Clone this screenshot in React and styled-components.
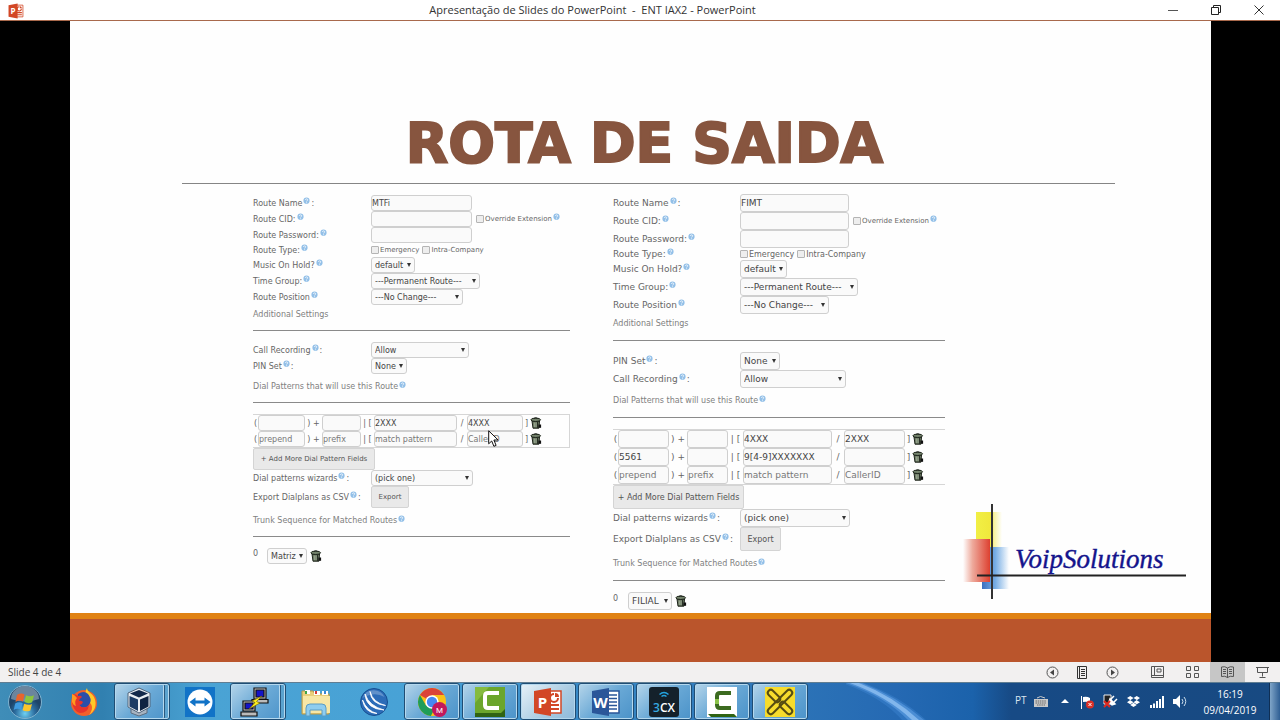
import React, { useState } from 'react';
import styled, { createGlobalStyle, css, ThemeProvider } from 'styled-components';
import { FaDropbox } from 'react-icons/fa';

const GlobalStyle = createGlobalStyle`
  * {
    box-sizing: border-box;
  }
  body {
    margin: 0;
    background: #000;
    font-family: 'Open Sans', 'Noto Sans', sans-serif;
  }
  button, input, select {
    margin: 0;
    font-family: inherit;
  }
`;

// the two form captures on the slide are the same page at different scales
const smallForm = {
  text: 8, note: 7, heading: 8, label: 118, row: 16, checkRow: 14, input: 101,
  headFirst: 3, headNext: 6, headBottom: 9, afterRule: 11,
  cols: '5px 47px 17px 39px 13px 83px 10px 56px 7px 1fr',
  button: 22, addWidth: 122, exportWidth: 38, trunkGap: 9, boxed: true,
};

const largeForm = {
  text: 9, note: 8, heading: 8, label: 127, row: 18, checkRow: 12, input: 109,
  headFirst: 3, headNext: 6, headBottom: 10, afterRule: 11,
  cols: '5px 51px 18px 41px 15px 89px 12px 61px 7px 1fr',
  button: 24, addWidth: 131, exportWidth: 41, trunkGap: 10, boxed: false,
};

const Screen = styled.div`
  position: relative;
  display: flex;
  flex-direction: column;
  min-height: 100vh;
`;

const TitleBar = styled.header`
  display: flex;
  align-items: center;
  height: 21px;
  background: #fff;
  border-bottom: 1px solid #a8694c;
`;

const AppIcon = styled.div`
  width: 34px;
  height: 16px;
  padding-left: 8px;
`;

const WindowTitle = styled.div`
  flex: 1;
  text-align: center;
  font-size: 11px;
  line-height: 20px;
  color: #333;
  white-space: nowrap;
`;

const WindowButton = styled.button`
  display: flex;
  align-items: center;
  justify-content: center;
  width: 43px;
  height: 20px;
  padding: 0;
  border: none;
  background: none;
`;

const Stage = styled.main`
  flex: 1;
  display: flex;
  padding: 0 69px 0 70px;
  background: #000;
`;

const Slide = styled.section`
  flex: 1;
  display: flex;
  flex-direction: column;
  background: #fefefe;
`;

const SlideTitle = styled.h1`
  margin: 0 96px 0 112px;
  padding: 80px 8px 0 0;
  height: 163px;
  border-bottom: 1px solid #858585;
  font-family: 'DejaVu Sans', Verdana, sans-serif;
  font-size: 55px;
  font-weight: 700;
  line-height: 84px;
  text-align: center;
  color: #87553f;
  -webkit-text-stroke: 2px #87553f;
`;

const SlideBody = styled.div`
  flex: 1;
  display: grid;
  grid-template-columns: 317fr 43px 332fr 241fr;
  align-items: start;
  padding: 10px 25px 0 183px;
`;

const Footer = styled.div`
  height: 49px;
  background: #ba552c;
  border-top: 6px solid #e08214;
`;

const Panel = styled.form`
  font-family: 'DejaVu Sans', Verdana, sans-serif;
  font-size: ${(p) => p.theme.text}px;
  color: #666;
`;

const FormRow = styled.div`
  display: flex;
  align-items: center;
  height: ${(p) => (p.checks ? p.theme.checkRow : p.theme.row)}px;
`;

const RowLabel = styled.label`
  display: flex;
  align-items: center;
  gap: 1px;
  width: ${(p) => p.theme.label}px;
  white-space: nowrap;
`;

const Heading = styled.h2`
  display: flex;
  align-items: center;
  gap: 1px;
  margin: 0 0 ${(p) => p.theme.afterRule}px;
  padding: ${(p) => (p.first ? p.theme.headFirst : p.theme.headNext)}px 0 ${(p) => p.theme.headBottom}px;
  border-bottom: 1px solid #8a8a8a;
  font-size: ${(p) => p.theme.heading}px;
  font-weight: 400;
  line-height: 13px;
  color: #808080;
  white-space: nowrap;
`;

const box = css`
  border: 1px solid #cfcfcf;
  border-radius: 3px;
  background: #fafafa;
  color: #444;
`;

const TextInput = styled.input`
  ${box}
  width: ${(p) => (p.fill ? '100%' : `${p.theme.input}px`)};
  min-width: 0;
  height: ${(p) => p.theme.row}px;
  padding: 0;
  font-size: ${(p) => p.theme.text}px;
  &::placeholder {
    color: #777;
    opacity: 1;
  }
`;

const SelectWrap = styled.span`
  position: relative;
  display: inline-flex;
  &::after {
    content: '';
    position: absolute;
    right: 4px;
    top: 50%;
    margin-top: -2px;
    border: 2px solid transparent;
    border-top: 4px solid #333;
    border-bottom: none;
  }
`;

const Select = styled.select`
  ${box}
  appearance: none;
  width: ${(p) => p.width}px;
  height: ${(p) => p.theme.row}px;
  padding: 0 0 0 3px;
  font-size: ${(p) => p.theme.text}px;
`;

const CheckLabel = styled.label`
  display: flex;
  align-items: center;
  gap: 1px;
  margin-left: ${(p) => (p.aside ? 4 : 0)}px;
  margin-right: ${(p) => (p.aside ? 0 : 3)}px;
  font-size: ${(p) => (p.aside ? 7 : p.theme.note)}px;
  white-space: nowrap;
`;

const CheckBox = styled.input`
  appearance: none;
  width: 8px;
  height: 8px;
  border: 1px solid #b4b4b4;
  border-radius: 1px;
  background: #eee;
`;

const DialTable = styled.div`
  border: 1px solid #d6d6d6;
  border-width: 1px ${(p) => (p.theme.boxed ? 1 : 0)}px 1px 0;
`;

const DialRow = styled.div`
  display: grid;
  grid-template-columns: ${(p) => p.theme.cols};
  align-items: center;
  height: ${(p) => p.theme.row}px;
  white-space: pre;
`;

const Mark = styled.span`
  text-align: center;
`;

const GreyButton = styled.button`
  width: ${(p) => (p.wide ? p.theme.addWidth : p.theme.exportWidth)}px;
  height: ${(p) => p.theme.button}px;
  padding: 0;
  border: 1px solid #d4d4d4;
  border-radius: 2px;
  background: #e9e9e9;
  font-size: ${(p) => p.theme.note}px;
  color: #555;
  white-space: nowrap;
`;

const ButtonRow = styled.div`
  display: flex;
  align-items: center;
  height: ${(p) => p.theme.button}px;
`;

const TrunkRow = styled.div`
  display: flex;
  align-items: center;
  gap: 3px;
`;

const TrunkIndex = styled.label`
  padding-bottom: 5px;
  margin-right: ${(p) => p.theme.trunkGap - 3}px;
  font-size: 8px;
`;

const LeftPanel = styled.div`
  padding-top: 1px;
`;

const RightPanel = styled.div`
  grid-column: 3;
`;

const LogoBox = styled.div`
  align-self: end;
  justify-self: end;
  padding-bottom: 9px;
`;

const StatusBar = styled.footer`
  display: flex;
  align-items: center;
  height: 20px;
  padding-left: 8px;
  background: #f2f0f0;
  font-size: 10px;
  color: #444;
`;

const Spacer = styled.div`
  flex: 1;
`;

const StatusButton = styled.button`
  display: flex;
  align-items: center;
  justify-content: center;
  width: ${(p) => (p.nav ? 30 : 35)}px;
  height: 20px;
  padding: 0;
  border: none;
  background: ${(p) => (p.active ? '#c6c6c6' : 'none')};
`;

const NavGroup = styled.div`
  display: flex;
  margin-right: 13px;
`;

const TaskBar = styled.nav`
  display: flex;
  align-items: center;
  height: 38px;
  border-top: 1px solid #5f7d92;
  background: linear-gradient(90deg, #3f8db8 0%, #3180b0 8%, #4aa3d4 16%, #48a2d6 32%, #3789c6 45%, #2e76b8 60%, #2569b3 70%, #1b62ab 76%, #174a85 79%, #184a82 100%);
`;

const Glare = styled.svg`
  margin-left: 38px;
`;

const StartButton = styled.button`
  display: flex;
  width: 56px;
  padding: 0 0 0 7px;
  border: none;
  background: none;
`;

const TaskList = styled.div`
  display: flex;
  gap: 2px;
`;

const TaskButton = styled.button`
  display: flex;
  align-items: center;
  justify-content: center;
  width: 56px;
  height: 37px;
  padding: 0 ${(p) => (p.stacked ? 7 : 0)}px 0 0;
  border: 1px solid transparent;
  border-radius: 3px;
  background: none;
  ${(p) => p.open && css`
    border-color: #1f4d74;
    box-shadow: inset 0 0 0 1px #b4d8ee;
    background: linear-gradient(135deg, ${p.active ? '#e8f2f8, #a9cbe2 60%, #8dbadb' : '#b5d5ea, #6aa9d6 50%, #4b93c9'});
  `}
  ${(p) => p.stacked && css`
    box-shadow: inset 0 0 0 1px #b4d8ee, inset -4px 0 0 #5ba3cf, inset -5px 0 0 #28587f, inset -6px 0 0 #b4d8ee;
  `}
`;

const Tray = styled.div`
  display: flex;
  align-items: center;
  margin-left: auto;
  height: 37px;
  color: #fff;
`;

const Language = styled.span`
  width: 15px;
  font-size: 10px;
  line-height: 30px;
  padding-bottom: 4px;
  color: #dbe6f0;
`;

const TrayItem = styled.span`
  display: flex;
  align-items: center;
  justify-content: center;
  width: 23px;
`;

const Clock = styled.time`
  width: 78px;
  font-size: 10px;
  line-height: 16px;
  text-align: center;
`;

const ShowDesktop = styled.button`
  width: 11px;
  height: 37px;
  padding: 0;
  border: none;
  border-left: 1px solid #0f2f55;
  background: linear-gradient(90deg, #7fa5c8, #2f5f94);
`;

const Pointer = styled.svg`
  position: absolute;
  left: 488px;
  top: 430px;
`;

const HelpIcon = () => (
  <svg width="7" height="12" viewBox="0 0 7 12" aria-hidden="true">
    <circle cx="3.5" cy="3.7" r="3.1" fill="#93c0e8" />
    <path d="M2.4 3c0-1.5 2.3-1.4 2.3-.1 0 .8-1.1.8-1.1 1.6M3.6 5.1v.7" fill="none" stroke="#fff" strokeWidth=".8" />
  </svg>
);

const TrashIcon = () => (
  <svg width="12" height="12" viewBox="0 0 12 12" aria-hidden="true">
    <path d="M2 4h7.500l-.6 7.200H3z" fill="#68765f" stroke="#1d241b" />
    <path d="M4.300 5.500v4.500M6 5.500v4.500" stroke="#aab6a2" strokeWidth=".8" />
    <path d="M7.500 5v6" stroke="#293026" />
    <ellipse cx="5.700" cy="2.800" rx="4.800" ry="1.700" fill="#74836c" stroke="#1d241b" />
    <path d="M4 1.300q2-1 3.500 0" fill="none" stroke="#1d241b" />
    <path d="M8.500 7.500h2.600v3.300H8.500z" fill="#111" />
  </svg>
);

const Drop = ({ id, value, width, label }) => (
  <SelectWrap>
    <Select id={id} width={width} defaultValue={value} aria-label={label}>
      <option>{value}</option>
    </Select>
  </SelectWrap>
);

const Label = ({ htmlFor, text, colon }) => (
  <RowLabel htmlFor={htmlFor}>
    {text}
    <HelpIcon />
    {colon && ':'}
  </RowLabel>
);

const SelectRow = ({ id, text, colon, value, width }) => (
  <FormRow>
    <Label htmlFor={id} text={text} colon={colon} />
    <Drop id={id} value={value} width={width} />
  </FormRow>
);

const Pattern = ({ values }) => {
  const field = (name, value) => (
    <TextInput fill="true" aria-label={name} placeholder={values ? '' : name} defaultValue={value} />
  );
  const [prepend = '', prefix = '', match = '', caller = ''] = values || [];
  return (
    <DialRow>
      <Mark>(</Mark>
      {field('prepend', prepend)}
      <Mark>) +</Mark>
      {field('prefix', prefix)}
      <Mark>| [</Mark>
      {field('match pattern', match)}
      <Mark>/</Mark>
      {field('CallerID', caller)}
      <Mark>]</Mark>
      <TrashIcon />
    </DialRow>
  );
};

const RouteForm = ({ id, theme, name, widths, recording, patterns, trunk }) => (
  <ThemeProvider theme={theme}>
    <Panel onSubmit={(e) => e.preventDefault()}>
      <FormRow>
        <Label htmlFor={`${id}-name`} text="Route Name" colon />
        <TextInput id={`${id}-name`} defaultValue={name} />
      </FormRow>
      <FormRow>
        <Label htmlFor={`${id}-cid`} text="Route CID:" />
        <TextInput id={`${id}-cid`} />
        <CheckLabel aside="true">
          <CheckBox type="checkbox" />
          Override Extension
          <HelpIcon />
        </CheckLabel>
      </FormRow>
      <FormRow>
        <Label htmlFor={`${id}-pass`} text="Route Password:" />
        <TextInput id={`${id}-pass`} />
      </FormRow>
      <FormRow checks="true">
        <Label htmlFor={`${id}-emergency`} text="Route Type:" />
        <CheckLabel>
          <CheckBox id={`${id}-emergency`} type="checkbox" />
          Emergency
        </CheckLabel>
        <CheckLabel>
          <CheckBox type="checkbox" />
          Intra-Company
        </CheckLabel>
      </FormRow>
      <SelectRow id={`${id}-moh`} text="Music On Hold?" value="default" width={widths.music} />
      <SelectRow id={`${id}-time`} text="Time Group:" value="---Permanent Route---" width={widths.time} />
      <SelectRow id={`${id}-pos`} text="Route Position" value="---No Change---" width={widths.position} />
      <Heading first="true">Additional Settings</Heading>
      {recording.map((item) => (
        <SelectRow key={item.text} id={`${id}-${item.value}`} colon {...item} />
      ))}
      <Heading>
        Dial Patterns that will use this Route
        <HelpIcon />
      </Heading>
      <DialTable>
        {patterns.map((values, i) => (
          <Pattern key={i} values={values} />
        ))}
        <Pattern />
      </DialTable>
      <ButtonRow>
        <GreyButton wide="true" type="button">+ Add More Dial Pattern Fields</GreyButton>
      </ButtonRow>
      <SelectRow id={`${id}-wiz`} text="Dial patterns wizards" colon value="(pick one)" width={widths.wizard} />
      <ButtonRow>
        <Label htmlFor={`${id}-csv`} text="Export Dialplans as CSV" colon />
        <GreyButton id={`${id}-csv`} type="button">Export</GreyButton>
      </ButtonRow>
      <Heading>
        Trunk Sequence for Matched Routes
        <HelpIcon />
      </Heading>
      <TrunkRow>
        <TrunkIndex htmlFor={`${id}-trunk`}>0</TrunkIndex>
        <Drop id={`${id}-trunk`} value={trunk} width={widths.trunk} />
        <TrashIcon />
      </TrunkRow>
    </Panel>
  </ThemeProvider>
);

const VoipLogo = () => (
  <svg width="224" height="95" viewBox="0 0 224 95" role="img" aria-label="VoipSolutions">
    <defs>
      <linearGradient id="lgY">
        <stop offset="0" stopColor="#f1ef45" />
        <stop offset=".55" stopColor="#f0e83c" />
        <stop offset=".7" stopColor="#f8f2a0" />
        <stop offset="1" stopColor="#fefefe" />
      </linearGradient>
      <linearGradient id="lgR">
        <stop offset="0" stopColor="#fefefe" />
        <stop offset=".35" stopColor="#eeaa9c" />
        <stop offset="1" stopColor="#dd4030" />
      </linearGradient>
      <linearGradient id="lgB">
        <stop offset="0" stopColor="#3a6fc0" />
        <stop offset=".5" stopColor="#78aee4" />
        <stop offset="1" stopColor="#fefefe" />
      </linearGradient>
    </defs>
    <rect x="14" y="8" width="26" height="36" fill="url(#lgY)" />
    <rect x="20" y="43" width="27" height="42" fill="url(#lgB)" />
    <rect x="1" y="35" width="27" height="43" fill="url(#lgR)" />
    <path d="M30 0v95" stroke="#333" strokeWidth="2" />
    <path d="M15 71.500h209" stroke="#222" strokeWidth="2" />
    <text x="53" y="64" fontFamily="'Liberation Serif', serif" fontStyle="italic" fontSize="27" fill="#14148c" stroke="#14148c" strokeWidth=".4">
      VoipSolutions
    </text>
  </svg>
);

const OfficeIcon = ({ size, color, letter, slides }) => (
  <svg width={size} height={size} viewBox="0 0 30 30">
    <path d="M15 4h13v22H15z" fill="#fff" stroke={color} strokeWidth="1.500" />
    {slides ? (
      <>
        <circle cx="21" cy="11" r="4" fill="none" stroke={color} strokeWidth="2" />
        <path d="M21 11V6h5v5z" fill="#fff" />
        <path d="M22 10V6q4 0 4 4z" fill={color} />
        <path d="M17 18h9M17 22h9" stroke={color} strokeWidth="2" />
      </>
    ) : (
      <path d="M17 8h9M17 11.500h9M17 15h9M17 18.500h9M17 22h9" stroke={color} strokeWidth="1.500" />
    )}
    <path d="M1 4 18 1v28L1 26z" fill={color} />
    <text x="9.500" y="20.500" textAnchor="middle" fontFamily="'Open Sans', sans-serif" fontWeight="700" fontSize="15" fill="#fff">
      {letter}
    </text>
  </svg>
);

const StartOrb = () => (
  <svg width="36" height="36" viewBox="0 0 36 36">
    <defs>
      <radialGradient id="orb" cy=".85">
        <stop offset="0" stopColor="#6fd0f2" />
        <stop offset=".6" stopColor="#2b6c9e" />
        <stop offset="1" stopColor="#1d4469" />
      </radialGradient>
    </defs>
    <circle cx="18" cy="18" r="16.500" fill="url(#orb)" stroke="#7fb3d0" />
    <path d="M4 15a14 13 0 0 1 28 0q-14 5-28 0z" fill="#fff" opacity=".35" />
    <path d="M10 11q4-2.500 7.500-.5l-1.500 7q-4-2-7.500.5z" fill="#e8642c" />
    <path d="M19 11.200q4 2 8 0l-1.800 7q-4 2-7.800-.2z" fill="#8cc63e" />
    <path d="M8.200 19.500q4-2.200 7.500-.3l-1.600 6.500q-4-2-7.400.4z" fill="#3f9be0" />
    <path d="M17.200 19.800q4 2 7.800.1l-1.700 6.500q-4 2-7.700-.2z" fill="#fbc52c" />
  </svg>
);

const FirefoxIcon = () => (
  <svg width="30" height="30" viewBox="0 0 30 30">
    <circle cx="15" cy="16" r="13" fill="#f2602a" />
    <path d="M18 1c0 4 5 5 7 9 4 8 0 15-5 18 4-5 4-10 0-13-3-4-5-9-2-14z" fill="#ffc928" />
    <path d="M9 7q6-4 10 0 4 5 2 9-3 6-9 4-5-3-3-13z" fill="#2b4fa8" />
    <path d="M3 7q4 0 6 2 3-1 4 1-3 2-3 4 2-1 4 1-1 3-4 3 5 5 10 0-1 8-9 8Q2 24 3 7z" fill="#e6342c" />
    <path d="M3 7q3 1 5 4-3 3-1 8-3-1-4-4z" fill="#ff9a1e" />
  </svg>
);

const VirtualBoxIcon = () => (
  <svg width="28" height="30" viewBox="0 0 28 30">
    <path d="M6 20v6l8 3 8-3v-6z" fill="#a7b4c2" stroke="#5e6d7e" />
    <path d="M3 6 14 1l11 5v14l-11 6-11-6z" fill="#e9eef3" stroke="#50647a" />
    <path d="M5 6.500 14 3l9 3.500-9 4z" fill="#13294b" />
    <path d="M4.500 9 13 12.500V24l-8.500-4.500z" fill="#1c3c66" />
    <path d="M23.500 9 15 12.500V24l8.500-4.500z" fill="#0f2342" />
  </svg>
);

const TeamViewerIcon = () => (
  <svg width="30" height="30" viewBox="0 0 30 30">
    <path d="M0 0h30v30H0z" fill="#1173c7" />
    <circle cx="15" cy="15" r="12.500" fill="#fff" />
    <path d="m4.500 15 6-4.500v3h9v-3l6 4.500-6 4.500v-3h-9v3z" fill="#1173c7" />
  </svg>
);

const PuttyIcon = () => (
  <svg width="30" height="30" viewBox="0 0 30 30">
    <g stroke="#111" strokeWidth="1.200">
      <path d="M14 1h12v11H14z" fill="#c9c9c9" />
      <path d="M12 12.500h16v3.500H12z" fill="#bbb" />
      <path d="M16 3h8v7h-8z" fill="#1414c8" />
      <path d="M3 14h12v10H3z" fill="#c9c9c9" />
      <path d="M1 25h16v4H1z" fill="#bbb" />
      <path d="M5 16h8v6H5z" fill="#1414c8" />
    </g>
    <path d="m22 9-10 5 3 1.500-6 6.500 11-6-3.500-1.500z" fill="#ffee20" stroke="#6b6000" strokeWidth=".6" />
  </svg>
);

const FolderIcon = () => (
  <svg width="32" height="30" viewBox="0 0 32 30">
    <path d="M2 4h11l2 3h14v20H2z" fill="#e9cf7c" stroke="#b99a48" />
    <path d="M5 3h5v4H5zM14 4h6v4h-6zM22 4h6v4h-6z" fill="#fff" />
    <path d="M5 4h2v3H5z" fill="#3fa548" />
    <path d="M15 4h2v3h-2z" fill="#d43c34" />
    <path d="M24 4h2v3h-2z" fill="#3b85d4" />
    <path d="M3 9h27v17H3z" fill="#f7e7a6" />
    <path d="M6 29v-8q0-4 4-4h12q4 0 4 4v8h-4v-6H10v6z" fill="#8ecdf0" stroke="#5b9cc4" />
  </svg>
);

const SwooshIcon = () => (
  <svg width="30" height="30" viewBox="0 0 30 30">
    <circle cx="15" cy="15" r="13.500" fill="#2c6cb8" stroke="#174f91" />
    <path d="M3.500 11a12 12 0 0 1 22-1q-10-6-22 1z" fill="#fff" opacity=".25" />
    <path d="M6 7q4 12 19 16Q7 22 6 7zM11 4.500q3 11 15.500 14Q12 17 11 4.500zM3.500 13Q8 24 18 26.500 6 26 3.500 13z" fill="#fff" stroke="#fff" strokeWidth=".8" />
  </svg>
);

const ChromeIcon = () => (
  <svg width="30" height="30" viewBox="0 0 30 30">
    <circle cx="15" cy="15" r="14" fill="#fbc116" />
    <path d="M15 15 2.900 8A14 14 0 0 1 27.100 8H15z" fill="#db4437" />
    <path d="M15 15 9 18.500 2.900 8a14 14 0 0 0 11 21l5-10z" fill="#1f9d58" />
    <circle cx="15" cy="15" r="6.700" fill="#fff" />
    <circle cx="15" cy="15" r="5.200" fill="#4688f1" />
    <circle cx="22.500" cy="22.500" r="7.500" fill="#c2185b" />
    <text x="22.500" y="25.500" textAnchor="middle" fontFamily="Roboto, sans-serif" fontSize="8" fill="#fff">M</text>
  </svg>
);

const CamtasiaIcon = ({ light }) => (
  <svg width="30" height="30" viewBox="0 0 30 30">
    <path d="M0 0h30v30H0z" fill={light ? '#fff' : '#6ba62c'} />
    {!light && <path d="M0 0h14L0 16z" fill="#85bb3f" />}
    <path d={light ? 'M1 27h26l3 3H4z' : 'M0 26h26l4-4v8H0z'} fill="#2f6313" />
    <path
      d="M22 8V6h-9q-3 0-3 3v9q0 3 3 3h9v-2"
      fill="none"
      stroke={light ? '#3c6b20' : '#fff'}
      strokeWidth="4"
    />
    {light && <path d="M10 12v5" stroke="#8bc34a" strokeWidth="4" />}
  </svg>
);

const ThreeCxIcon = () => (
  <svg width="30" height="30" viewBox="0 0 30 30">
    <rect width="30" height="30" rx="3" fill="#14212b" />
    <path d="M10.500 7.500q4.500-4 9 0M12.500 9.500q2.500-2 5 0" fill="none" stroke="#24a3df" strokeWidth="1.500" />
    <text x="15" y="24.500" textAnchor="middle" fontFamily="'Open Sans', sans-serif" fontWeight="600" fontSize="12" fill="#fff">
      <tspan fill="#35a9e1">3</tspan>CX
    </text>
  </svg>
);

const KnotIcon = () => (
  <svg width="30" height="30" viewBox="0 0 30 30">
    <path d="M0 0h30v30H0z" fill="#f7dc2c" />
    <g fill="none" stroke="#574d12" strokeWidth="2">
      <rect x="12" y="-1" width="6" height="32" rx="3" transform="rotate(45 15 15)" />
      <rect x="12" y="-1" width="6" height="15" rx="3" transform="rotate(-45 15 15)" />
      <rect x="12" y="16" width="6" height="15" rx="3" transform="rotate(-45 15 15)" />
    </g>
  </svg>
);

const tasks = [
  { name: 'Firefox', icon: <FirefoxIcon /> },
  { name: 'VirtualBox', icon: <VirtualBoxIcon />, open: true, stacked: true },
  { name: 'TeamViewer', icon: <TeamViewerIcon /> },
  { name: 'PuTTY', icon: <PuttyIcon />, open: true, stacked: true },
  { name: 'Explorer', icon: <FolderIcon /> },
  { name: 'Linphone', icon: <SwooshIcon /> },
  { name: 'Chrome', icon: <ChromeIcon />, open: true },
  { name: 'Camtasia', icon: <CamtasiaIcon />, open: true },
  { name: 'PowerPoint', icon: <OfficeIcon size={30} color="#d24726" letter="P" slides />, open: true },
  { name: 'Word', icon: <OfficeIcon size={30} color="#2a5699" letter="W" />, open: true },
  { name: '3CX', icon: <ThreeCxIcon />, open: true },
  { name: 'Recorder', icon: <CamtasiaIcon light />, open: true },
  { name: 'Tools', icon: <KnotIcon />, open: true },
];

const line = { fill: 'none', stroke: '#555', strokeWidth: 1 };

const views = [
  { name: 'Normal', icon: <path d="M1.500 1.500h12v11h-12zM1.500 10.500h12M4.500 1.500v9M7 4h4v3H7z" {...line} /> },
  { name: 'Classificação', icon: <path d="M1.500 1.500h4v4h-4zM9.500 1.500h4v4h-4zM1.500 8.500h4v4h-4zM9.500 8.500h4v4h-4z" {...line} /> },
  { name: 'Leitura', icon: <path d="M7.500 3v10M7.500 3Q5 1 1.500 2v9.500q3.500-1 6 1 2.500-2 6-1V2Q10 1 7.500 3zM3 4.500h3M3 6.500h3M3 8.500h3M9 4.500h3M9 6.500h3M9 8.500h3" {...line} /> },
  { name: 'Apresentação', icon: <path d="M1 2.500h13M2.500 2.500v5h10v-5M7.500 7.500v4M4.500 12.500h6" {...line} /> },
];

const App = () => {
  const [activeTask, setActiveTask] = useState('PowerPoint');
  const [view, setView] = useState('Leitura');

  return (
    <Screen>
      <GlobalStyle />
      <TitleBar>
        <AppIcon>
          <OfficeIcon size={16} color="#d24726" letter="P" slides />
        </AppIcon>
        <WindowTitle>{'Apresentação de Slides do PowerPoint \u00a0-\u00a0 ENT IAX2 - PowerPoint'}</WindowTitle>
        <WindowButton aria-label="Minimizar">
          <svg width="10" height="10"><path d="M0 5.500h10" {...line} /></svg>
        </WindowButton>
        <WindowButton aria-label="Restaurar">
          <svg width="10" height="10"><path d="M.5 2.500h7v7h-7zM2.500 2.500v-2h7v7h-2" {...line} stroke="#222" /></svg>
        </WindowButton>
        <WindowButton aria-label="Fechar">
          <svg width="10" height="10"><path d="m.5.5 9 9m0-9-9 9" {...line} stroke="#333" /></svg>
        </WindowButton>
      </TitleBar>

      <Stage>
        <Slide>
          <SlideTitle>ROTA DE SAIDA</SlideTitle>
          <SlideBody>
            <LeftPanel>
              <RouteForm
                id="mt"
                theme={smallForm}
                name="MTFi"
                widths={{ music: 44, time: 109, position: 92, wizard: 102, trunk: 40 }}
                recording={[
                  { text: 'Call Recording', value: 'Allow', width: 98 },
                  { text: 'PIN Set', value: 'None', width: 36 },
                ]}
                patterns={[['', '', '2XXX', '4XXX']]}
                trunk="Matriz"
              />
            </LeftPanel>
            <RightPanel>
              <RouteForm
                id="fi"
                theme={largeForm}
                name="FIMT"
                widths={{ music: 47, time: 118, position: 89, wizard: 110, trunk: 44 }}
                recording={[
                  { text: 'PIN Set', value: 'None', width: 40 },
                  { text: 'Call Recording', value: 'Allow', width: 106 },
                ]}
                patterns={[['', '', '4XXX', '2XXX'], ['5561', '', '9[4-9]XXXXXXX', '']]}
                trunk="FILIAL"
              />
            </RightPanel>
            <LogoBox>
              <VoipLogo />
            </LogoBox>
          </SlideBody>
          <Footer />
        </Slide>
      </Stage>

      <StatusBar>
        Slide 4 de 4
        <Spacer />
        <NavGroup>
          <StatusButton nav="true" aria-label="Anterior">
            <svg width="13" height="13"><circle cx="6.500" cy="6.500" r="5.500" {...line} /><path d="M8 3.500v6l-4-3z" fill="#444" /></svg>
          </StatusButton>
          <StatusButton nav="true" aria-label="Menu">
            <svg width="12" height="13"><path d="M1.500.5h9v12h-9zM3.500.5v12M5 3.500h4M5 5.500h4M5 7.500h4M5 9.500h4" {...line} stroke="#333" /></svg>
          </StatusButton>
          <StatusButton nav="true" aria-label="Próximo">
            <svg width="13" height="13"><circle cx="6.500" cy="6.500" r="5.500" {...line} /><path d="M5 3.500v6l4-3z" fill="#444" /></svg>
          </StatusButton>
        </NavGroup>
        {views.map((v) => (
          <StatusButton key={v.name} aria-label={v.name} active={view === v.name ? 'true' : undefined} onClick={() => setView(v.name)}>
            <svg width="15" height="14">{v.icon}</svg>
          </StatusButton>
        ))}
      </StatusBar>

      <TaskBar>
        <StartButton aria-label="Iniciar">
          <StartOrb />
        </StartButton>
        <TaskList>
          {tasks.map((task) => (
            <TaskButton
              key={task.name}
              aria-label={task.name}
              open={task.open}
              stacked={task.stacked ? 'true' : undefined}
              active={activeTask === task.name ? 'true' : undefined}
              onClick={() => setActiveTask(task.name)}
            >
              {task.icon}
            </TaskButton>
          ))}
        </TaskList>
        <Glare width="90" height="37" viewBox="0 0 90 37" aria-hidden="true">
          <path d="M-4 0h22q36 13 62 37H56Q36 14-4 0z" fill="#3f86d0" opacity=".45" />
          <path d="M0 0h16q34 13 62 37H62Q40 14 0 0z" fill="#5f9fe2" opacity=".6" />
          <path d="M4 0h9q34 13 60 37h-7Q42 14 4 0z" fill="#93c3f3" opacity=".75" />
        </Glare>
        <Tray>
          <Language>PT</Language>
          <TrayItem>
            <svg width="15" height="13"><path d="M3 3q3-3 8 0" fill="none" stroke="#ccc" /><path d="M0 4h14v8H0z" fill="#c9c9c9" /><path d="M1.500 6h11M1.500 8h11M3 10h8" stroke="#666" strokeDasharray="1.500 .7" /></svg>
          </TrayItem>
          <TrayItem>
            <svg width="8" height="5"><path d="m4 0 4 4H0z" fill="#fff" /></svg>
          </TrayItem>
          <TrayItem>
            <svg width="15" height="14"><path d="M1.500 1v13" stroke="#fff" /><path d="M3 2q4-1 7 1v5q-3-2-7-1z" fill="#fff" /><circle cx="10" cy="9.500" r="4" fill="#dc3026" /><path d="m8.500 8 3 3m0-3-3 3" stroke="#fff" /></svg>
          </TrayItem>
          <TrayItem>
            <svg width="15" height="15"><path d="M1 1h7v9H1z" fill="#222" stroke="#eee" /><path d="m8 5 3-3m0 6 3-3M7 5l5 5-3 1-3-3z" fill="#fff" stroke="#fff" strokeWidth="1.500" /><path d="m1 7 6 6m0-6-6 6" stroke="#e02a20" strokeWidth="2" /></svg>
          </TrayItem>
          <TrayItem>
            <FaDropbox size={13} />
          </TrayItem>
          <TrayItem>
            <svg width="14" height="12"><path d="M1 12V9M4 12V7.500M7 12V5M10 12V3M13 12V0" stroke="#fff" strokeWidth="2" /></svg>
          </TrayItem>
          <TrayItem>
            <svg width="14" height="13"><path d="M0 4h3l4-4v13l-4-4H0z" fill="#fff" /><path d="M9 4q2 2.500 0 5M11 2q3.500 4.500 0 9" fill="none" stroke="#cfe0ee" /></svg>
          </TrayItem>
          <Clock>16:19<br />09/04/2019</Clock>
          <ShowDesktop aria-label="Mostrar área de trabalho" />
        </Tray>
      </TaskBar>

      <Pointer width="11" height="18" viewBox="0 0 11 18" aria-hidden="true">
        <path d="M.7.8v13l3-2.800 2.200 5.300 2.200-.9L5.900 10h4.200z" fill="#fff" stroke="#111" />
      </Pointer>
    </Screen>
  );
};

export default App;
